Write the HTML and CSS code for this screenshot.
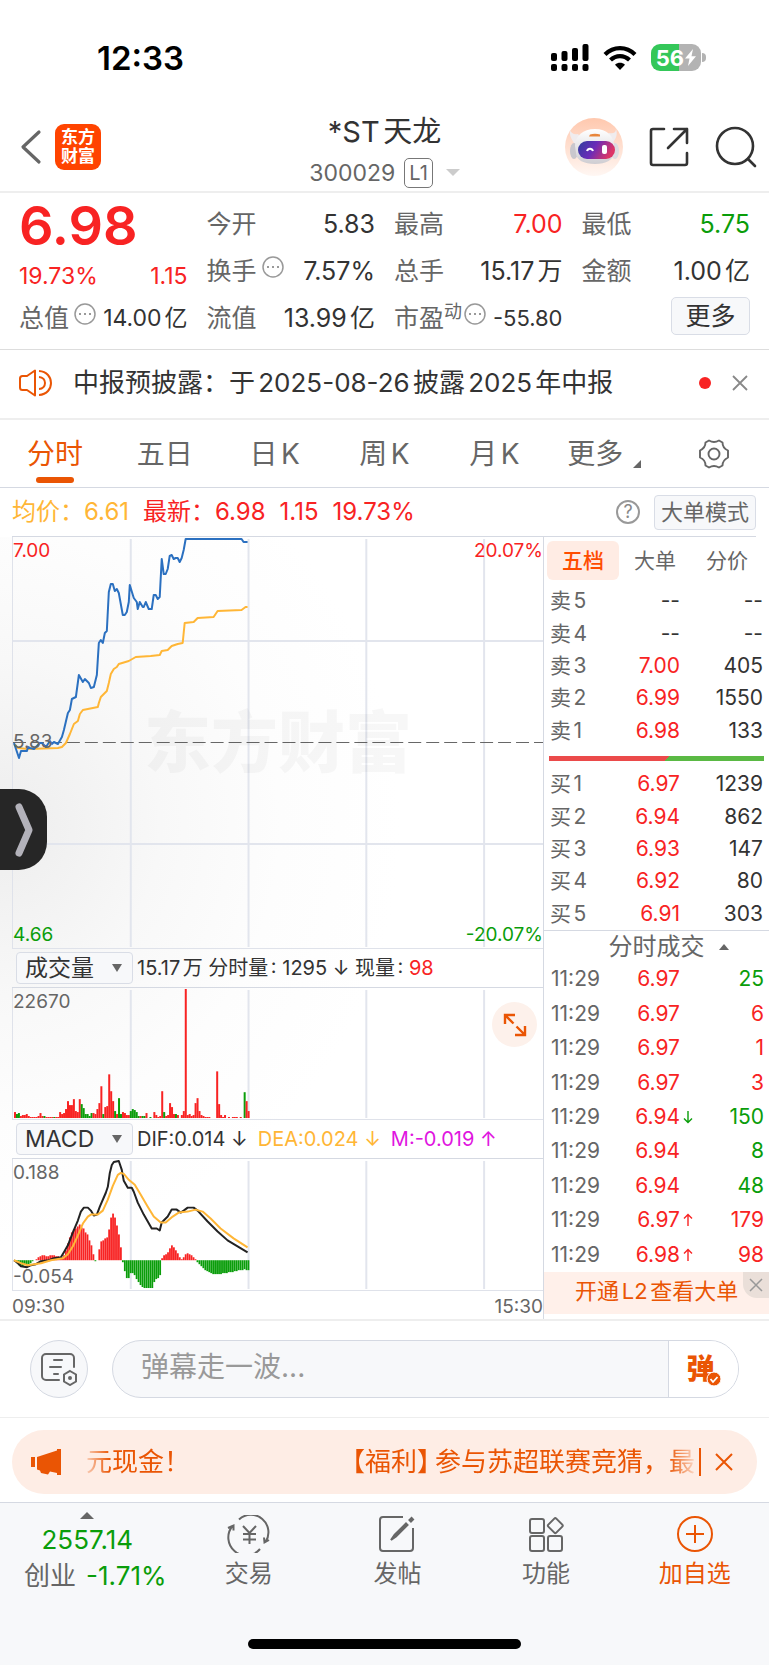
FILE: index.html
```
<!DOCTYPE html>
<html lang="zh-CN">
<head>
    <meta charset="UTF-8">
    <meta name="viewport" content="width=device-width, initial-scale=1">
    <title>*ST天龙 300029</title>
    <link rel="stylesheet" href="styles.css">
</head>
<body>
<div class="status">
    <span class="time">12:33</span>
    <div class="status-icons">
        <svg width="38" height="28" viewBox="0 0 38 28">
            <rect x="0" y="9" width="6" height="8" rx="2"/>
            <rect x="10.500" y="7" width="6" height="10" rx="2"/>
            <rect x="21" y="4" width="6" height="13" rx="2"/>
            <rect x="31.500" y="0" width="6" height="17" rx="2"/>
            <rect x="0" y="20" width="6" height="7" rx="2"/>
            <rect x="10.500" y="20" width="6" height="7" rx="2"/>
            <rect x="21" y="20" width="6" height="7" rx="2"/>
            <rect x="31.500" y="20" width="6" height="7" rx="2"/>
        </svg>
        <svg width="34" height="26" viewBox="0 0 34 26" fill="none" stroke="#000" stroke-width="4.200">
            <path d="M2 9.500C10.500 1 23.500 1 32 9.500"/>
            <path d="M7.500 15C13 9.700 21 9.700 26.500 15"/>
            <path d="M17 25l-5-5.300c3-2.600 7-2.600 10 0z" fill="#000" stroke="none"/>
        </svg>
        <div class="battery">
            <span>56</span>
            <svg width="11" height="17" viewBox="0 0 11 17"><path d="M8 0L0 9.500h4.500L3 17l8-9.700H6.500z" fill="#fff"/></svg>
        </div>
    </div>
</div>

<header class="header">
    <div class="header-left">
        <button class="icon-btn" aria-label="返回">
            <svg width="22" height="36" viewBox="0 0 22 36" fill="none" stroke="#666" stroke-width="3.200" stroke-linecap="round" stroke-linejoin="round"><path d="M19 3L3 18l16 15"/></svg>
        </button>
        <div class="logo"><span>东方</span><span>财富</span></div>
    </div>
    <div class="header-title">
        <h1>*ST天龙</h1>
        <div class="code"><span>300029</span><span class="level">L1</span><i class="arrow-down"></i></div>
    </div>
    <div class="header-right">
        <button class="icon-btn" aria-label="智能助手">
            <svg width="58" height="60" viewBox="0 0 58 60">
                <defs>
                    <linearGradient id="halo" x1="0" y1="0" x2="0" y2="1"><stop offset="0" stop-color="#ffc8ae"/><stop offset="1" stop-color="#fff7f3"/></linearGradient>
                    <linearGradient id="visor" x1="0" y1="0" x2="1" y2="0.300"><stop offset="0" stop-color="#2f3f9e"/><stop offset="0.500" stop-color="#6a2bb8"/><stop offset="1" stop-color="#dd3566"/></linearGradient>
                    <linearGradient id="helmet" x1="0" y1="0" x2="0" y2="1"><stop offset="0" stop-color="#fff"/><stop offset="1" stop-color="#cfcdd2"/></linearGradient>
                </defs>
                <circle cx="29" cy="30" r="29" fill="url(#halo)"/>
                <path d="M5 13c1 3 4 5 8 4l4 5-6 6c-4-4-7-10-6-15zM51 12c0 4-3 5-7 4l-4 6 6 5c5-4 7-10 5-15z" fill="#f0ecee"/>
                <ellipse cx="9" cy="34" rx="4" ry="8" fill="#c9c7cd"/>
                <ellipse cx="50" cy="34" rx="4" ry="8" fill="#dddbe0"/>
                <path d="M10 29c0-10 8-17 20-17s19 7 19 17v6c0 8-8 12-19 12S11 43 11 36z" fill="url(#helmet)"/>
                <rect x="13" y="24" width="37" height="18" rx="9" fill="url(#visor)"/>
                <path d="M25 17.500c3-1 7-1 10 0v2H24z" fill="#e8863c"/>
                <path d="M22 34c1-3 5-3 6 0" fill="none" stroke="#fff" stroke-width="2"/>
                <rect x="37" y="28" width="5" height="9" rx="2" fill="#fff"/>
            </svg>
        </button>
        <button class="icon-btn" aria-label="分享">
            <svg width="40" height="40" viewBox="0 0 40 40" fill="none" stroke="#333" stroke-width="2.600" stroke-linecap="round" stroke-linejoin="round"><path d="M15 2H4a2 2 0 0 0-2 2v32a2 2 0 0 0 2 2h32a2 2 0 0 0 2-2V26M25 2h13v14M38 2L19 21"/></svg>
        </button>
        <button class="icon-btn" aria-label="搜索">
            <svg width="42" height="42" viewBox="0 0 42 42" fill="none" stroke="#333" stroke-width="2.600" stroke-linecap="round"><circle cx="20" cy="20" r="18"/><path d="M33 33l7 7"/></svg>
        </button>
    </div>
</header>

<section class="quote">
    <div class="quote-col">
        <div class="cell"><strong class="price up">6.98</strong></div>
        <div class="cell change up"><span>19.73%</span><span>1.15</span></div>
        <div class="cell"><span class="label">总值<svg class="dots"><use href="#more-dots"/></svg></span><span class="total">14.00亿</span></div>
    </div>
    <div class="quote-col">
        <div class="cell"><span class="label">今开</span><span>5.83</span></div>
        <div class="cell"><span class="label">换手<svg class="dots"><use href="#more-dots"/></svg></span><span>7.57%</span></div>
        <div class="cell"><span class="label">流值</span><span>13.99亿</span></div>
    </div>
    <div class="quote-col">
        <div class="cell"><span class="label">最高</span><span class="up">7.00</span></div>
        <div class="cell"><span class="label">总手</span><span>15.17万</span></div>
        <div class="cell"><span class="label">市盈<sup>动</sup><svg class="dots"><use href="#more-dots"/></svg></span><span class="small">-55.80</span></div>
    </div>
    <div class="quote-col">
        <div class="cell"><span class="label">最低</span><span class="down">5.75</span></div>
        <div class="cell"><span class="label">金额</span><span>1.00亿</span></div>
        <div class="cell cell-end"><button class="more">更多</button></div>
    </div>
</section>

<section class="notice">
    <svg width="34" height="28" viewBox="0 0 34 28" fill="none" stroke="#ea5504" stroke-width="2" stroke-linejoin="round"><path d="M16 1.500v25L8 21H3.500C2 21 1 20 1 18.500v-9C1 8 2 7 3.500 7H8z"/><path d="M20 2c16 1 16 23 0 24M20 8c8 .5 8 11.500 0 12"/></svg>
    <a class="notice-text" href="#">中报预披露：于2025-08-26披露2025年中报</a>
    <i class="dot"></i>
    <button class="icon-btn" aria-label="关闭">
        <svg width="16" height="16" viewBox="0 0 16 16" stroke="#888" stroke-width="1.800"><path d="M1 1l14 14M15 1L1 15"/></svg>
    </button>
</section>

<nav class="tabs">
    <a class="tab active" href="#">分时</a>
    <a class="tab" href="#">五日</a>
    <a class="tab" href="#">日K</a>
    <a class="tab" href="#">周K</a>
    <a class="tab" href="#">月K</a>
    <a class="tab tab-more" href="#">更多<svg width="8" height="8" viewBox="0 0 8 8"><path d="M8 0v8H0z" fill="#666"/></svg></a>
    <button class="icon-btn" aria-label="设置">
        <svg width="32" height="32" viewBox="0 0 32 32" fill="none" stroke="#666" stroke-width="1.900" stroke-linejoin="round"><path d="M11 2.500c3 1.700 7 1.700 10 0l3.500 2c0 3.500 2 6.500 5.500 8v7c-3 1.500-5.500 4.500-5.500 8l-3.500 2c-3-1.700-7-1.700-10 0l-3.500-2c0-3.500-2-6.500-5.500-8v-7c3-1.500 5.500-4.500 5.500-8z"/><circle cx="16" cy="16" r="5.500"/></svg>
    </button>
</nav>

<div class="summary">
    <span class="avg">均价：6.61</span>
    <span class="up">最新：6.98</span>
    <span class="up">1.15</span>
    <span class="up">19.73%</span>
    <button class="help">?</button>
    <button class="mode">大单模式</button>
</div>

<main class="board">
    <div class="charts">
        <div class="chart chart-price">
            <div class="watermark">东方财富</div>
            <svg viewBox="0 0 531 411" preserveAspectRatio="none" fill="none">
                <path class="grid" d="M118 2V410M236 2V410M354 2V410M472 2V410M0 104H531M0 307H531"/>
                <path class="base" d="M0 205.500H531"/>
                <polyline class="line-avg" points="1,207 5,211 15,212 45,211 49,210 53,206 57,197 61,187 65,184 67,177 70,173 85,170 86,166 88,160 90,158 94,154 96,146 98,137 101,132 104,130 106,127 116,124 123,120 138,119 147,118 149,114 155,113 159,109 165,107 170,106 172,86 181,85 185,81 201,80 205,74 229,73 233,70 235,70"/>
                <polyline class="line-price" points="1,206 6,221 8,214 14,214 15,210 17,211 21,212 23,210 27,206 29,206 33,210 37,204 39,207 41,205 45,207 49,200 51,193 55,176 57,173 59,162 63,160 66,138 70,145 72,142 76,146 78,151 81,150 84,138 86,106 88,103 90,106 92,96 94,94 96,55 98,47 100,47 102,54 104,52 106,56 110,78 112,78 114,75 116,65 117,48 121,61 124,65 125,72 127,65 130,70 131,70 133,65 136,72 139,72 141,58 143,58 145,62 147,60 149,22 151,37 153,37 155,32 157,19 159,18 161,22 163,21 165,21 167,25 169,21 171,13 173,2 229,2 231,5 235,5"/>
            </svg>
            <span class="tag tag-tl up">7.00</span>
            <span class="tag tag-tr up">20.07%</span>
            <span class="tag tag-ml">5.83</span>
            <span class="tag tag-bl down">4.66</span>
            <span class="tag tag-br down">-20.07%</span>
        </div>

        <div class="bar">
            <label class="picker"><select aria-label="副图指标一"><option>成交量</option></select></label>
            <span>15.17万 分时量: 1295 ↓ 现量: <b class="up">98</b></span>
        </div>
        <div class="chart chart-sub">
            <svg id="volume" viewBox="0 0 531 132" preserveAspectRatio="none" fill="none">
                <path class="grid" d="M118 2V131M236 2V131M354 2V131M472 2V131"/>
            </svg>
            <span class="tag tag-tl">22670</span>
            <button class="expand" aria-label="全屏">
                <svg width="24" height="24" viewBox="0 0 24 24" fill="none" stroke="#ea5504" stroke-width="2.400"><path d="M2 11V2h10M2 2l8.500 8.500M22 13v9H12M22 22l-8.500-8.500"/></svg>
            </button>
        </div>

        <div class="bar">
            <label class="picker"><select aria-label="副图指标二"><option>MACD</option></select></label>
            <span>DIF:0.014 ↓</span><span class="avg">DEA:0.024 ↓</span><span class="macd-m">M:-0.019 ↑</span>
        </div>
        <div class="chart chart-sub">
            <svg id="macd" viewBox="0 0 531 132" preserveAspectRatio="none" fill="none">
                <path class="grid" d="M118 2V131M236 2V131M354 2V131M472 2V131"/>
                <g id="macdBars"></g>
                <polyline class="line-dif" points="1,102 5,105 8,108 14,109 18,107 23,106 28,103 36,102 41,100 48,99 51,94 55,87 60,74 65,62 68,53 71,49 75,49 78,52 81,57 84,56 87,48 93,34 95,28 97,14 99,6 101,3 106,2 109,11 111,22 115,29 119,29 121,33 125,44 131,56 139,70 144,70 147,72 149,64 155,58 159,51 164,51 168,54 171,52 175,49 181,49 185,52 195,63 205,73 215,82 225,88 235,94"/>
                <polyline class="line-avg" points="1,102 8,105 15,107 28,105 38,102 50,100 55,96 60,88 65,77 70,65 75,58 78,56 85,56 90,52 95,41 100,27 105,16 108,14 111,15 116,21 122,26 128,36 135,48 141,58 148,64 153,64 160,58 166,54 175,53 183,51 190,53 198,60 208,70 221,80 235,89"/>
            </svg>
            <span class="tag tag-tl">0.188</span>
            <span class="tag tag-bl">-0.054</span>
        </div>
        <div class="axis"><span>09:30</span><span>15:30</span></div>
    </div>

    <aside class="side">
        <div class="side-tabs">
            <a class="active" href="#">五档</a>
            <a href="#">大单</a>
            <a href="#">分价</a>
        </div>
        <table class="book sell">
            <tr><th>卖5</th><td>--</td><td>--</td></tr>
            <tr><th>卖4</th><td>--</td><td>--</td></tr>
            <tr><th>卖3</th><td class="up">7.00</td><td>405</td></tr>
            <tr><th>卖2</th><td class="up">6.99</td><td>1550</td></tr>
            <tr><th>卖1</th><td class="up">6.98</td><td>133</td></tr>
        </table>
        <div class="ratio"></div>
        <table class="book buy">
            <tr><th>买1</th><td class="up">6.97</td><td>1239</td></tr>
            <tr><th>买2</th><td class="up">6.94</td><td>862</td></tr>
            <tr><th>买3</th><td class="up">6.93</td><td>147</td></tr>
            <tr><th>买4</th><td class="up">6.92</td><td>80</td></tr>
            <tr><th>买5</th><td class="up">6.91</td><td>303</td></tr>
        </table>
        <button class="deal-title">分时成交<i class="arrow-up"></i></button>
        <table class="deals">
            <tr><th>11:29</th><td class="up">6.97</td><td></td><td class="down">25</td></tr>
            <tr><th>11:29</th><td class="up">6.97</td><td></td><td class="up">6</td></tr>
            <tr><th>11:29</th><td class="up">6.97</td><td></td><td class="up">1</td></tr>
            <tr><th>11:29</th><td class="up">6.97</td><td></td><td class="up">3</td></tr>
            <tr><th>11:29</th><td class="up">6.94</td><td class="down"><svg class="tick"><use href="#tick-down"/></svg></td><td class="down">150</td></tr>
            <tr><th>11:29</th><td class="up">6.94</td><td></td><td class="down">8</td></tr>
            <tr><th>11:29</th><td class="up">6.94</td><td></td><td class="down">48</td></tr>
            <tr><th>11:29</th><td class="up">6.97</td><td class="up"><svg class="tick"><use href="#tick-up"/></svg></td><td class="up">179</td></tr>
            <tr><th>11:29</th><td class="up">6.98</td><td class="up"><svg class="tick"><use href="#tick-up"/></svg></td><td class="up">98</td></tr>
        </table>
        <div class="level2">
            <a href="#">开通L2查看大单</a>
            <button class="level2-close" aria-label="关闭">
                <svg width="14" height="14" viewBox="0 0 14 14" stroke="#999" stroke-width="1.500"><path d="M1 1l12 12M13 1L1 13"/></svg>
            </button>
        </div>
    </aside>

    <button class="drawer" aria-label="展开">
        <svg width="18" height="54" viewBox="0 0 18 54" fill="none" stroke="#b3b2ba" stroke-width="7" stroke-linecap="round" stroke-linejoin="round"><path d="M4 4l10 23L4 50"/></svg>
    </button>
</main>

<form class="danmu">
    <button type="button" class="danmu-set" aria-label="弹幕设置">
        <svg width="36" height="34" viewBox="0 0 36 34" fill="none" stroke="#666" stroke-width="2" stroke-linecap="round"><path d="M18 28H5a4 4 0 0 1-4-4V6a4 4 0 0 1 4-4h24a4 4 0 0 1 4 4v9"/><path d="M13 8h8M9 15h11M13 22h4"/><path d="M29 19l6 3.500v7L29 33l-6-3.500v-7z"/><circle cx="29" cy="26" r="1"/></svg>
    </button>
    <div class="danmu-box">
        <input type="text" placeholder="弹幕走一波..." aria-label="弹幕">
        <button type="button" class="danmu-send">弹<svg width="16" height="16" viewBox="0 0 16 16"><circle cx="8" cy="8" r="7" fill="#ea5504" stroke="#fff"/><path d="M4.500 8l2.500 3 4.500-5" fill="none" stroke="#fff" stroke-width="1.800"/></svg></button>
    </div>
</form>

<div class="promo">
    <svg width="31" height="28" viewBox="0 0 31 28" fill="#ea5504"><path d="M0 9h4v10H0zM6 9l20-6.500V1h4v26h-4v-2l-7-1.500-2 3-7-1.500-1-2.500-3-1z"/></svg>
    <div class="promo-text">
        <span>元现金！</span>
        <span class="promo-msg"><b>【福利】</b><span>参与苏超联赛竞猜，最</span></span>
    </div>
    <button class="promo-close" aria-label="关闭">
        <svg width="18" height="18" viewBox="0 0 18 18" stroke="#ea5504" stroke-width="2"><path d="M1 1l16 16M17 1L1 17"/></svg>
    </button>
</div>

<footer class="footer">
    <nav class="dock">
        <a class="dock-index" href="#">
            <i class="arrow-up"></i>
            <span class="down">2557.14</span>
            <span class="index-row">创业<em class="down">-1.71%</em></span>
        </a>
        <a href="#">
            <svg width="44" height="38" viewBox="0 0 44 38" fill="none" stroke="#666" stroke-width="2"><path d="M12 4.500A17.500 17.500 0 0 1 38.500 27M42 25l-4.500 2.500-.5-5M33 34A17.500 17.500 0 0 1 5.500 11M1 13l5.500-2.500v5"/><path d="M16 11l6.500 7 6.500-7M22.500 18v11M16 19h13M16 24.500h13"/></svg>
            <span>交易</span>
        </a>
        <a href="#">
            <svg width="38" height="38" viewBox="0 0 38 38" fill="none" stroke="#666" stroke-width="2"><path d="M25 2H5a3 3 0 0 0-3 3v28a3 3 0 0 0 3 3h27a3 3 0 0 0 3-3V13"/><path d="M28 8.500L16.500 20 13 25l5-3.500L29.500 10z" fill="#666"/><path d="M31.500 6.500L35 3" stroke-width="4"/></svg>
            <span>发帖</span>
        </a>
        <a href="#">
            <svg width="38" height="38" viewBox="0 0 38 38" fill="none" stroke="#666" stroke-width="2"><rect x="3" y="4" width="14" height="14" rx="2"/><rect x="3" y="21" width="14" height="15" rx="2"/><rect x="21" y="21" width="14" height="15" rx="2"/><path d="M27.300 3.600l-6 6q-1 1 0 2l6 6q1 1 2 0l6-6q1-1 0-2l-6-6q-1-1-2 0z"/></svg>
            <span>功能</span>
        </a>
        <a class="dock-add" href="#">
            <svg width="38" height="38" viewBox="0 0 38 38" fill="none" stroke="#ea5504" stroke-width="2"><circle cx="19" cy="19" r="17"/><path d="M10 19h18M19 10v18"/></svg>
            <span>加自选</span>
        </a>
    </nav>
    <div class="home"></div>
</footer>

<svg class="symbols">
    <symbol id="more-dots" viewBox="0 0 22 22"><circle cx="11" cy="11" r="10" fill="none" stroke="#999" stroke-width="1.500"/><path d="M5 11h2M10 11h2M15 11h2" stroke="#999" stroke-width="2"/></symbol>
    <symbol id="tick-down" viewBox="0 0 10 14"><path d="M5 1v11M1 8.500l4 4 4-4" fill="none" stroke="currentColor" stroke-width="1.400"/></symbol>
    <symbol id="tick-up" viewBox="0 0 10 14"><path d="M5 13V2M1 5.500l4-4 4 4" fill="none" stroke="currentColor" stroke-width="1.400"/></symbol>
</svg>
<script src="chart.js"></script>
</body>
</html>
```

FILE: styles.css
```
* {
    margin: 0;
    padding: 0;
    box-sizing: border-box;
}

body {
    background: #fff;
    color: #333;
    font-family: Inter, "Noto Sans CJK SC", sans-serif;
    font-size: 25px;
    font-weight: 400;
    line-height: 30px;
    text-autospace: normal;
}

a {
    color: inherit;
    text-decoration: none;
}

button, input, select {
    border: none;
    background: none;
    color: inherit;
    font: inherit;
    text-autospace: inherit;
}

svg {
    display: block;
    flex: none;
}

b, em, i {
    font-style: normal;
    font-weight: inherit;
}

.up {
    color: #f82323;
}

.down {
    color: #0a9d0a;
}

.avg {
    color: #ffb636;
}

.icon-btn {
    display: flex;
}

.symbols {
    position: absolute;
    width: 0;
    height: 0;
}

.arrow-up, .arrow-down {
    border: 7px solid transparent;
}

.arrow-down {
    border-top-color: #ccc;
    border-bottom: 0;
}

.arrow-up {
    border-bottom-color: #666;
    border-top: 0;
}

/* status bar */
.status {
    display: flex;
    justify-content: space-between;
    align-items: center;
    height: 112px;
    padding: 3px 68px 0 97px;
}

.time {
    color: #000;
    font-size: 33px;
    font-weight: 600;
}

.status-icons {
    display: flex;
    align-items: center;
    gap: 14px;
}

.battery {
    position: relative;
    display: flex;
    align-items: center;
    justify-content: center;
    gap: 1px;
    width: 50px;
    height: 27px;
    border-radius: 9px;
    background: linear-gradient(90deg, #34c759 56%, #b3b3b3 56%);
    color: #fff;
    font-size: 22px;
    font-weight: 700;
}

.battery::after {
    content: "";
    position: absolute;
    right: -5px;
    width: 4px;
    height: 9px;
    border-radius: 0 4px 4px 0;
    background: #b3b3b3;
}

/* header */
.header {
    display: grid;
    grid-template-columns: 1fr auto 1fr;
    align-items: center;
    height: 81px;
    padding: 0 12px 3px;
    border-bottom: 2px solid #eee;
}

.header-left, .header-right {
    display: flex;
    align-items: center;
    padding-bottom: 6px;
}

.header-left {
    gap: 13px;
    padding-left: 8px;
}

.header-right {
    justify-content: flex-end;
    gap: 26px;
}

.logo {
    display: flex;
    flex-direction: column;
    align-items: center;
    justify-content: center;
    width: 46px;
    height: 46px;
    border-radius: 9px;
    background: #ff4400;
    color: #fff;
    font-size: 17px;
    font-weight: 700;
    line-height: 19px;
}

.header-title {
    display: flex;
    flex-direction: column;
    align-items: center;
    gap: 7px;
}

.header-title h1 {
    font-size: 29px;
    font-weight: 400;
    line-height: 38px;
}

.code {
    display: flex;
    align-items: center;
    gap: 9px;
    color: #666;
    font-size: 23px;
    line-height: 28px;
}

.level {
    padding: 0 4px;
    border: 1px solid #777;
    border-radius: 5px;
    font-size: 20px;
}

.code .arrow-down {
    margin-left: 4px;
}

/* quote */
.quote {
    display: grid;
    grid-template-columns: repeat(4, 1fr);
    gap: 19px;
    padding: 7px 19px 8px;
    border-bottom: 1px solid #ddd;
}

.cell {
    display: flex;
    justify-content: space-between;
    align-items: center;
    height: 47px;
    white-space: nowrap;
}

.label {
    display: flex;
    align-items: center;
    color: #666;
}

.label sup {
    align-self: flex-start;
    font-size: 18px;
    line-height: 18px;
}

.dots {
    align-self: flex-start;
    width: 22px;
    height: 22px;
    margin-left: 5px;
}

sup + .dots {
    margin-left: 2px;
}

.price {
    padding-top: 4px;
    font-size: 54px;
    font-weight: 600;
}

.change {
    align-items: flex-end;
    padding-bottom: 3px;
    font-size: 23px;
}

.total {
    font-size: 23px;
}

.small {
    font-size: 22px;
}

.cell-end {
    justify-content: flex-end;
    padding-bottom: 4px;
}

.more {
    width: 79px;
    height: 38px;
    border: 1px solid #d9dde6;
    border-radius: 5px;
    background: #f7f8fa;
    line-height: 34px;
}

/* notice */
.notice {
    display: flex;
    align-items: center;
    height: 70px;
    padding: 0 21px 2px 19px;
    border-bottom: 2px solid #eee;
}

.notice-text {
    flex: 1;
    margin-left: 20px;
    font-size: 26px;
    white-space: nowrap;
}

.dot {
    width: 12px;
    height: 12px;
    margin-right: 21px;
    border-radius: 50%;
    background: #f82323;
}

/* period tabs */
.tabs {
    display: grid;
    grid-template-columns: repeat(7, 1fr);
    justify-items: center;
    align-items: center;
    height: 68px;
    border-bottom: 1px solid #d5d9e2;
    color: #666;
    font-size: 28px;
}

.tab {
    position: relative;
    line-height: 66px;
}

.tab.active {
    color: #ea5504;
}

.tab.active::after {
    content: "";
    position: absolute;
    left: 9px;
    right: 9px;
    bottom: 4px;
    height: 6px;
    border-radius: 3px;
    background: #ea5504;
}

.tab-more {
    display: flex;
    align-items: center;
    gap: 10px;
}

.tab-more svg {
    margin-top: 20px;
}

.summary {
    display: flex;
    align-items: center;
    gap: 14px;
    height: 49px;
    margin: 0 13px 0 12px;
    border-bottom: 1px solid #d5d9e2;
    font-size: 24px;
    white-space: nowrap;
}

.help {
    width: 24px;
    height: 24px;
    margin-left: auto;
    border: 2px solid #999;
    border-radius: 50%;
    color: #888;
    font-size: 18px;
    line-height: 20px;
}

.mode {
    width: 102px;
    height: 35px;
    border: 1px solid #d9dde6;
    border-radius: 4px;
    background: #f7f8fa;
    color: #666;
    font-size: 22px;
    line-height: 31px;
}

/* charts */
.board {
    position: relative;
    display: flex;
    border-bottom: 2px solid #eee;
    background: radial-gradient(400px 420px at 0 290px, #ededed, #f8f8f8 40%, #fdfdfd 70%, #fff);
}

.charts {
    flex: 1;
    min-width: 0;
    margin-left: 12px;
}

.chart {
    position: relative;
    border-left: 1px solid #dfe2ea;
    border-bottom: 1px solid #dfe2ea;
}

.chart > svg {
    width: 100%;
    height: 100%;
}

.chart-price {
    height: 412px;
}

.chart-sub {
    height: 132px;
}

.watermark {
    position: absolute;
    inset: 0;
    display: flex;
    align-items: center;
    justify-content: center;
    color: rgba(0, 0, 0, 0.03);
    font-size: 67px;
    font-weight: 900;
}

.grid {
    stroke: #e2e5ed;
    stroke-width: 2;
}

.base {
    stroke: #666;
    stroke-width: 1;
    stroke-dasharray: 13 5;
}

.line-avg, .line-price, .line-dif {
    stroke: #ffb636;
    stroke-width: 2;
    stroke-linejoin: round;
}

.line-price {
    stroke: #2b70c0;
}

.line-dif {
    stroke: #222;
}

.bar-up {
    fill: #f82323;
}

.bar-down {
    fill: #0a9d0a;
}

.tag {
    position: absolute;
    color: #666;
    font-size: 19px;
    line-height: 24px;
}

.tag.up {
    color: #f82323;
}

.tag.down {
    color: #0a9d0a;
}

.tag-tl {
    top: 2px;
    left: 0;
}

.tag-tr {
    top: 2px;
    right: 0;
}

.tag-ml {
    top: 193px;
    left: 0;
}

.tag-bl {
    bottom: 1px;
    left: 0;
}

.tag-br {
    right: 0;
    bottom: 1px;
}

.bar {
    display: flex;
    align-items: center;
    gap: 10px;
    height: 39px;
    padding-left: 4px;
    border-bottom: 1px solid #d5d9e2;
    font-size: 20px;
    white-space: nowrap;
}

.picker {
    position: relative;
    margin-right: -6px;
}

.picker select {
    display: block;
    width: 117px;
    height: 32px;
    padding-left: 8px;
    border: 1px solid #d9dde6;
    border-radius: 4px;
    background: #f7f8fa;
    font-size: 23px;
    line-height: 28px;
    appearance: none;
}

.picker::after {
    content: "";
    position: absolute;
    top: 12px;
    right: 11px;
    border: 5px solid transparent;
    border-top: 8px solid #666;
    border-bottom: 0;
}

.macd-m {
    color: #e015e0;
}

.expand {
    position: absolute;
    top: 14px;
    right: 6px;
    display: flex;
    align-items: center;
    justify-content: center;
    width: 45px;
    height: 45px;
    border-radius: 50%;
    background: #fdf1eb;
}

.axis {
    display: flex;
    justify-content: space-between;
    height: 28px;
    color: #666;
    font-size: 19px;
    line-height: 32px;
}

/* order book */
.side {
    width: 226px;
    padding-top: 4px;
    border-left: 1px solid #d5d9e2;
    background: #fff;
}

.side-tabs {
    display: grid;
    grid-template-columns: repeat(3, 1fr);
    margin: 0 6px 5px 3px;
    color: #666;
    font-size: 21px;
    line-height: 39px;
    text-align: center;
}

.side-tabs .active {
    border-radius: 6px;
    background: #ffece4;
    color: #ff4d00;
    font-weight: 500;
}

.book, .deals {
    width: 100%;
    border-collapse: collapse;
    table-layout: fixed;
    font-size: 21px;
    line-height: 24px;
}

.book {
    height: 162px;
}

.book th, .deals th {
    padding-left: 6px;
    color: #666;
    font-weight: 400;
    text-align: left;
}

.book th {
    width: 60px;
}

.book td, .deals td {
    text-align: right;
}

.book td:nth-child(2) {
    width: 76px;
}

.book td:last-child {
    padding-right: 6px;
}

.ratio {
    height: 5px;
    margin: 9px 5px 7px;
    background: linear-gradient(135deg, #eb4a4a 55%, #5ab944 55%);
}

.deal-title {
    display: flex;
    align-items: center;
    justify-content: center;
    gap: 14px;
    width: 100%;
    height: 32px;
    padding-left: 24px;
    border-top: 1px solid #d5d9e2;
    color: #666;
    font-size: 24px;
    line-height: 28px;
}

.deal-title .arrow-up {
    border-width: 0 5px 6px;
}

.deals {
    height: 310px;
}

.deals th {
    width: 75px;
    padding-left: 7px;
}

.deals td:nth-child(2) {
    width: 61px;
}

.deals td:nth-child(3) {
    width: 13px;
}

.deals td:last-child {
    padding-right: 5px;
}

.tick {
    width: 10px;
    height: 14px;
    margin-left: auto;
}

.level2 {
    position: relative;
    height: 42px;
    padding-left: 31px;
    background: #fff0ea;
    color: #ea5504;
    font-size: 22px;
    line-height: 38px;
    white-space: nowrap;
}

.level2-close {
    position: absolute;
    top: 0;
    right: 0;
    display: flex;
    align-items: center;
    justify-content: center;
    width: 26px;
    height: 26px;
    border-bottom-left-radius: 14px;
    background: #eadfd9;
}

.drawer {
    position: absolute;
    top: 252px;
    left: 0;
    display: flex;
    align-items: center;
    width: 47px;
    height: 81px;
    padding-left: 15px;
    border-radius: 0 28px 28px 0;
    background: #262626;
}

/* danmu */
.danmu {
    display: flex;
    gap: 24px;
    padding: 19px 30px;
    border-bottom: 1px solid #eee;
}

.danmu-set {
    display: flex;
    align-items: center;
    justify-content: center;
    width: 58px;
    height: 58px;
    border: 1px solid #d5d9e2;
    border-radius: 50%;
    background: #f7f8fa;
}

.danmu-box {
    display: flex;
    flex: 1;
    overflow: hidden;
    border: 1px solid #d5d9e2;
    border-radius: 29px;
    background: #f7f8fa;
}

.danmu-box input {
    flex: 1;
    min-width: 0;
    padding: 0 0 4px 28px;
    outline: none;
    font-size: 28px;
    text-autospace: no-autospace;
}

.danmu-box input::placeholder {
    color: #999;
    opacity: 1;
}

.danmu-send {
    position: relative;
    width: 70px;
    padding-right: 6px;
    border-left: 1px solid #d5d9e2;
    background: #fff;
    color: #ea5504;
    font-size: 28px;
    font-weight: 900;
    line-height: 54px;
}

.danmu-send svg {
    position: absolute;
    right: 16px;
    bottom: 10px;
}

/* promo */
.promo {
    display: flex;
    align-items: center;
    height: 64px;
    margin: 12px 12px 8px;
    padding: 0 24px 0 19px;
    border-radius: 32px;
    background: #feede5;
    color: #ea5504;
    font-size: 26px;
}

.promo-text {
    display: flex;
    flex: 1;
    justify-content: space-between;
    min-width: 0;
    margin-left: 18px;
    padding: 0 4px 0 6px;
    white-space: nowrap;
    -webkit-mask: linear-gradient(90deg, transparent, #000 30px, #000 calc(100% - 30px), transparent);
    mask: linear-gradient(90deg, transparent, #000 30px, #000 calc(100% - 30px), transparent);
}

.promo-msg {
    display: flex;
    gap: 5px;
}

.promo-msg b {
    font-feature-settings: "halt";
}

.promo-close {
    display: flex;
    align-items: center;
    height: 28px;
    padding-left: 14px;
    border-left: 2px solid #ea5504;
}

/* footer */
.footer {
    height: 163px;
    border-top: 1px solid #d5d9e2;
    background: #f7f8fa;
}

.dock {
    display: flex;
    height: 136px;
    color: #666;
    font-size: 24px;
    line-height: 32px;
}

.dock a {
    display: flex;
    flex: 149;
    flex-direction: column;
    align-items: center;
    gap: 5px;
    padding-top: 12px;
}

.dock .dock-index {
    flex: 175;
    gap: 6px;
    padding-top: 9px;
    font-size: 26px;
    line-height: 30px;
}

.index-row {
    display: flex;
    gap: 10px;
    padding-left: 16px;
}

.dock .dock-add {
    color: #ea5504;
}

.home {
    width: 273px;
    height: 10px;
    margin: 0 auto;
    border-radius: 5px;
    background: #000;
}
```

FILE: chart.js
```
// one bar per minute, 09:30 - 11:30; a negative volume is a falling minute
var volume = [
    6, -4, -5, 2, 3, 3, 4, 2, 1, 1, 1, 1, 2, 5, 2, -2, 1, 1, 1, 1,
    -1, 1, 1, 6, 4, 5, 9, 17, 13, 13, 19, 7, 6, 19, -14, -10, -4, -4, -2, -5,
    5, 4, 9, 15, 32, -4, 11, 12, 44, 27, 17, -7, 4, -20, -4, 6, 5, 3, 3, -7,
    -9, -8, -6, -2, 2, -2, -2, 5, 0, -1, 0, 6, 3, 1, 2, 27, -6, 2, 3, 15,
    11, 4, -4, 3, 0, 3, 7, 130, 3, 4, 2, 3, 15, 20, 7, 3, 2, 1, 1, 1,
    0, 0, 0, 47, 14, 3, 1, 3, 0, 1, 0, 1, 1, 1, 0, 1, 0, -26, 17, 7
];

var macd = [
    0, -3, -5, -6, -6, -5, -4, -4, -3, -1, 0, 1, 3, 4, 5, 5, 4, 4, 5, 5,
    5, 4, 4, 3, 3, 5, 10, 17, 23, 28, 31, 32, 34, 36, 33, 32, 28, 26, 20, 15,
    6, -1, 0, 11, 19, 20, 22, 23, 31, 43, 47, 43, 35, 26, 13, -2, -11, -18, -18, -13,
    -13, -15, -19, -22, -25, -27, -28, -28, -28, -28, -28, -22, -19, -18, -15, 2, 5, 6, 8, 12,
    15, 13, 10, 7, 3, 1, 3, 6, 7, 6, 5, 3, 1, -2, -4, -6, -8, -10, -11, -12,
    -13, -14, -14, -14, -14, -14, -13, -13, -13, -12, -12, -12, -11, -11, -10, -10, -10, -9, -10, -10
];

var step = 236 / 120;

function addBar(parent, i, top, height, up, width) {
    var rect = document.createElementNS("http://www.w3.org/2000/svg", "rect");
    rect.setAttribute("x", 1 + i * step);
    rect.setAttribute("y", top);
    rect.setAttribute("width", width);
    rect.setAttribute("height", height);
    rect.setAttribute("class", up ? "bar-up" : "bar-down");
    parent.appendChild(rect);
}

volume.forEach(function (v, i) {
    var h = Math.abs(v);
    addBar(document.getElementById("volume"), i, 131 - h, h, v > 0, 2);
});

macd.forEach(function (v, i) {
    var h = Math.abs(v);
    addBar(document.getElementById("macdBars"), i, v > 0 ? 102 - h : 102, h, v > 0, 1.8);
});
```
